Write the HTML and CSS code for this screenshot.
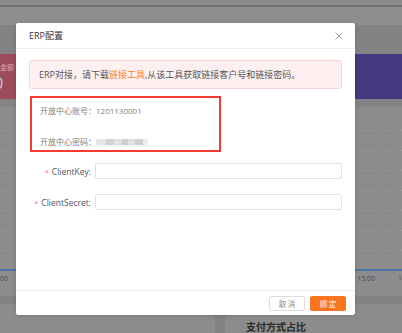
FILE: index.html
```html
<!DOCTYPE html>
<html lang="zh-CN">
<head>
<meta charset="utf-8">
<title>ERP配置</title>
<link rel="stylesheet" href="styles.css">
</head>
<body>
<div class="page">
  <div class="topbar"></div>
  <div class="tabs"></div>
  <div class="content">
    <div class="stat-row">
      <div class="stat stat-red">
        <span class="stat-label">实收金额</span>
        <span class="stat-value">0</span>
      </div>
      <div class="stat stat-purple"></div>
    </div>
    <div class="chart">
      <div class="grid">
        <i></i><i></i><i></i><i></i><i></i><i></i><i></i>
      </div>
      <div class="axis"></div>
      <div class="ticks">
        <span>06:00</span><span>07:00</span><span>08:00</span><span>09:00</span><span>10:00</span>
        <span>11:00</span><span>12:00</span><span>13:00</span><span>14:00</span><span>15:00</span><span>16:00</span>
      </div>
    </div>
    <div class="bottom-row">
      <div class="panel panel-left"></div>
      <div class="panel panel-right"><h3>支付方式占比</h3></div>
    </div>
  </div>

  <div class="modal">
    <div class="modal-header">
      <span class="modal-title">ERP配置</span>
      <svg class="close" width="8" height="8" viewBox="0 0 8 8"><path d="M0.5 0.5L7.5 7.5M7.5 0.5L0.5 7.5" stroke="#9a9a9a" stroke-width="0.9" fill="none"/></svg>
    </div>
    <div class="modal-body">
      <div class="alert">ERP对接，请下载<span class="link">链接工具</span>,从该工具获取链接客户号和链接密码。</div>
      <div class="account-box">
        <div class="account-line">开放中心账号：1201130001</div>
        <div class="account-line">开放中心密码：<span class="masked"></span></div>
      </div>
      <div class="form-row">
        <label class="form-label"><span class="req">*</span>ClientKey:</label>
        <div class="input"></div>
      </div>
      <div class="form-row">
        <label class="form-label"><span class="req">*</span>ClientSecret:</label>
        <div class="input"></div>
      </div>
    </div>
    <div class="modal-footer">
      <button class="btn btn-cancel">取 消</button>
      <button class="btn btn-primary">绑 定</button>
    </div>
  </div>
</div>
</body>
</html>
```

FILE: styles.css
```css
* { box-sizing: border-box; margin: 0; padding: 0; }
html, body { width: 402px; height: 333px; overflow: hidden; }
body {
  font-family: "Open Sans", "Noto Sans CJK SC", sans-serif;
  background: #838383;
}
.page {
  position: relative;
  width: 402px;
  height: 333px;
  overflow: hidden;
  display: flex;
  flex-direction: column;
}
.topbar {
  height: 7px;
  background: #8b8b8b;
  border-bottom: 2px solid #6f6f6f;
}
.tabs {
  height: 19px;
  background: #8e8e8e;
}
.content {
  flex: 1;
  display: flex;
  flex-direction: column;
  background: #838385;
  padding-top: 29px;
}
.stat-row {
  display: flex;
  gap: 10px;
  height: 45px;
}
.stat { flex: 1; }
.stat-red {
  margin-left: -40px;
  background: #9c4b5b;
  display: flex;
  flex-direction: column;
  color: #d9a9b2;
}
.stat-label {
  font-size: 7px;
  margin: 8px 0 0 26px;
}
.stat-value {
  font-size: 16px;
  line-height: 18px;
  margin: 2px 0 0 34px;
  color: #c9c9c9;
}
.stat-purple { background: #46397f; }

.chart {
  margin-top: 8px;
  height: 189px;
  background: #8c8c8c;
  display: flex;
  flex-direction: column;
}
.grid {
  display: flex;
  flex-direction: column;
  gap: 19px;
  padding-top: 23px;
}
.grid i {
  display: block;
  height: 1px;
  border-top: 1px dashed #979797;
}
.axis {
  margin-top: 18px;
  height: 2px;
  background: #4c74a6;
}
.ticks {
  display: flex;
  margin-left: -10px;
  margin-top: 3px;
  font-size: 7px;
  color: #4d4d4d;
  white-space: nowrap;
}
.ticks span { flex: 0 0 40.8px; }

.bottom-row {
  margin-top: 8px;
  flex: 1;
  display: flex;
  gap: 10px;
}
.panel { background: #8c8c8c; }
.panel-left { width: 215px; }
.panel-right { flex: 1; padding: 16px 0 0 21px; }
.panel-right h3 {
  font-size: 10px;
  font-weight: 700;
  color: #2a2a2a;
  line-height: 13px;
  font-family: "Noto Sans CJK SC", sans-serif;
}

/* modal */
.modal {
  position: absolute;
  left: 16px;
  top: 23px;
  width: 339px;
  height: 292px;
  background: #fff;
  border-radius: 2px;
  box-shadow: 0 1px 4px rgba(0,0,0,0.15);
  display: flex;
  flex-direction: column;
}
.modal-header {
  height: 26px;
  border-bottom: 1px solid #ececec;
  display: flex;
  align-items: center;
  justify-content: space-between;
  padding: 0 12px 0 13px;
}
.modal-title {
  font-size: 9px;
  color: #333;
}
.close { display: block; }
.modal-body {
  flex: 1;
  padding: 11px 13px 0 13px;
  display: flex;
  flex-direction: column;
}
.alert {
  height: 29px;
  background: #fef0f0;
  border: 1px solid #fbd2d2;
  border-radius: 3px;
  display: flex;
  align-items: center;
  padding-left: 9px;
  font-size: 9px;
  color: #555;
  white-space: nowrap;
}
.link { color: #ff7d1f; }
.account-box {
  margin-top: 7px;
  margin-left: 1px;
  width: 191px;
  height: 56px;
  border: 2px solid #f43b30;
  padding: 6px 0 0 8px;
  display: flex;
  flex-direction: column;
  gap: 17px;
}
.account-line {
  font-size: 8px;
  line-height: 14px;
  color: #808080;
  display: flex;
  align-items: center;
}
.masked {
  display: inline-block;
  width: 52px;
  height: 6px;
  background: linear-gradient(90deg, #e6e6e6 0 20%, #d2d2d2 20% 35%, #e2e2e2 35% 50%, #cfcfcf 50% 62%, #e0e0e0 62% 75%, #d0d0d0 75% 90%, #ececec 90%);
  filter: blur(0.6px);
}
.form-row {
  display: flex;
  align-items: center;
  height: 16px;
  margin-top: 11px;
}
.form-row + .form-row { margin-top: 15px; }
.form-label {
  width: 64px;
  text-align: right;
  padding-right: 2px;
  font-size: 8.5px;
  color: #555;
  white-space: nowrap;
}
.req {
  color: #f56c6c;
  margin-right: 3px;
  font-size: 7px;
}
.input {
  flex: 1;
  height: 16px;
  border: 1px solid #dfe1e6;
  border-radius: 2px;
  margin-left: 2px;
}
.modal-footer {
  height: 25px;
  border-top: 1px solid #ececec;
  display: flex;
  align-items: center;
  justify-content: flex-end;
  gap: 5px;
  padding-right: 9px;
}
.btn {
  width: 36px;
  height: 15px;
  border-radius: 2px;
  font-size: 7.5px;
  font-family: "Noto Sans CJK SC", sans-serif;
  display: flex;
  align-items: center;
  justify-content: center;
}
.btn-cancel {
  background: #fff;
  border: 1px solid #dcdcdc;
  color: #888;
}
.btn-primary {
  background: #fa7520;
  border: 1px solid #fa7520;
  color: #fff;
}
```
